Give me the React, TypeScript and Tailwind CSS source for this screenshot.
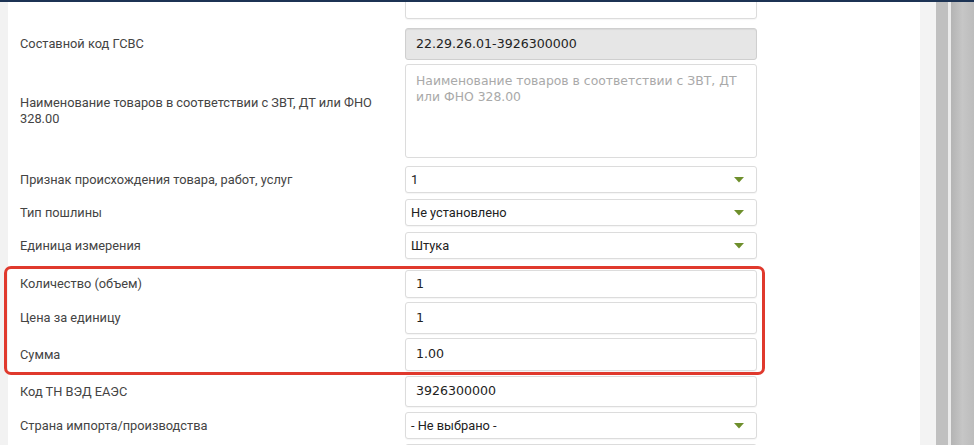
import React from "react";

const labelFont = { fontFamily: "Roboto, 'Noto Sans', sans-serif" };
const inputFont = { fontFamily: "'DejaVu Sans', Verdana, sans-serif" };

function Arrow() {
  return (
    <svg width="10" height="6" viewBox="0 0 10 6" className="shrink-0">
      <polygon points="0,0 10,0 5,5.5" fill="#6e8f2c" />
    </svg>
  );
}

function Row({
  label,
  children,
  mt,
}: {
  label: React.ReactNode;
  children: React.ReactNode;
  mt: string;
}) {
  return (
    <div className={`flex items-center ${mt}`}>
      <div
        className="w-[397px] pl-[12px] pr-[20px] text-[12.8px] leading-[16px] text-[#444]"
        style={labelFont}
      >
        {label}
      </div>
      <div className="w-[352px]">{children}</div>
    </div>
  );
}

function TextInput({ value, h, gray }: { value: string; h: string; gray?: boolean }) {
  return (
    <div
      className={`${h} flex items-center rounded-[3px] border px-[10px] text-[12.6px] text-[#222] ${
        gray
          ? "border-[#cfcfcf] bg-[#e6e6e6] shadow-[inset_0_1px_1px_rgba(0,0,0,0.06)]"
          : "border-[#dcdcdc] bg-white shadow-[0_1px_1px_rgba(0,0,0,0.04)]"
      }`}
      style={inputFont}
    >
      {value}
    </div>
  );
}

function Select({ value }: { value: string }) {
  return (
    <div
      className="h-[27px] flex items-center justify-between rounded-[3px] border border-[#dcdcdc] bg-white pl-[5px] pr-[12px] text-[12.8px] text-[#222] shadow-[0_1px_1px_rgba(0,0,0,0.04)]"
      style={labelFont}
    >
      <span>{value}</span>
      <Arrow />
    </div>
  );
}

export default function App() {
  return (
    <div className="relative w-[974px] h-[445px] overflow-hidden bg-white flex flex-col">
      <div className="h-[2px] w-full bg-[#1c3354] shrink-0" />
      <div className="flex flex-1 min-h-0">
        <div className="w-[8px] bg-[#f2f2f2] shrink-0" />
        <div className="w-[912px] bg-white overflow-hidden">
          <div className="flex flex-col mt-[-15px]">
            <Row label="" mt="mt-0">
              <TextInput value="" h="h-[32px]" />
            </Row>
            <Row label="Составной код ГСВС" mt="mt-[9px]">
              <TextInput value="22.29.26.01-3926300000" h="h-[32px]" gray />
            </Row>
            <Row
              label={
                <>
                  Наименование товаров в соответствии с ЗВТ, ДТ или ФНО
                  <br />
                  328.00
                </>
              }
              mt="mt-[4px]"
            >
              <div
                className="h-[94px] rounded-[3px] border border-[#dcdcdc] bg-white px-[10px] pt-[8px] text-[12.4px] leading-[16px] text-[#a9a9a9]"
                style={inputFont}
              >
                Наименование товаров в соответствии с ЗВТ, ДТ
                <br />
                или ФНО 328.00
              </div>
            </Row>
            <Row label="Признак происхождения товара, работ, услуг" mt="mt-[8px]">
              <Select value="1" />
            </Row>
            <Row label="Тип пошлины" mt="mt-[6px]">
              <Select value="Не установлено" />
            </Row>
            <Row label="Единица измерения" mt="mt-[6px]">
              <Select value="Штука" />
            </Row>
            <Row label="Количество (объем)" mt="mt-[11px]">
              <TextInput value="1" h="h-[28px]" />
            </Row>
            <Row label="Цена за единицу" mt="mt-[4px]">
              <TextInput value="1" h="h-[32px]" />
            </Row>
            <Row label="Сумма" mt="mt-[4px]">
              <TextInput value="1.00" h="h-[33px]" />
            </Row>
            <Row label="Код ТН ВЭД ЕАЭС" mt="mt-[5px]">
              <TextInput value="3926300000" h="h-[31px]" />
            </Row>
            <Row label="Страна импорта/производства" mt="mt-[5px]">
              <Select value="- Не выбрано -" />
            </Row>
            <Row label="" mt="mt-[5px]">
              <TextInput value="" h="h-[30px]" />
            </Row>
          </div>
        </div>
        <div className="w-[16px] bg-[#f3f3f3] shrink-0" />
        <div className="w-[12px] bg-[#c0c0c0] shrink-0" />
        <div className="w-[3px] bg-[#ececec] shrink-0" />
        <div className="flex-1 bg-gradient-to-r from-[#b4b4b4] via-[#c6c6c6] to-[#bcbcbc]" />
      </div>
      <div className="absolute left-[4px] top-[266px] w-[761px] h-[109px] rounded-[7px] border-[3px] border-[#e0392d]" />
    </div>
  );
}
